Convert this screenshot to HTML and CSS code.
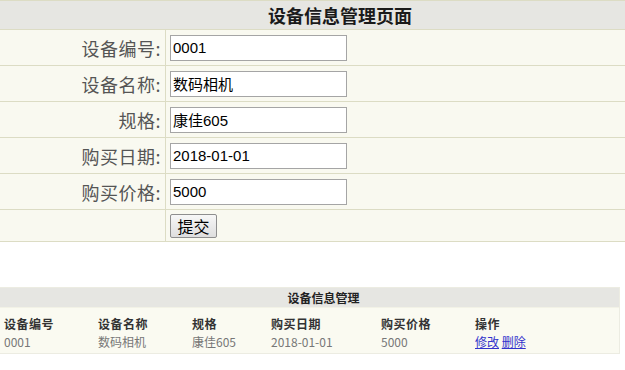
FILE: index.html
```html
<!DOCTYPE html>
<html lang="zh">
<head>
<meta charset="utf-8">
<link rel="stylesheet" href="styles.css">
</head>
<body>
<table class="form">
  <tr><th class="title" colspan="2">设备信息管理页面</th></tr>
  <tr><td class="label">设备编号:</td><td class="field"><input class="inp" type="text" value="0001"></td></tr>
  <tr><td class="label">设备名称:</td><td class="field"><input class="inp" type="text" value="数码相机"></td></tr>
  <tr><td class="label">规格:</td><td class="field"><input class="inp" type="text" value="康佳605"></td></tr>
  <tr><td class="label">购买日期:</td><td class="field"><input class="inp" type="text" value="2018-01-01"></td></tr>
  <tr><td class="label">购买价格:</td><td class="field"><input class="inp" type="text" value="5000"></td></tr>
  <tr class="last"><td class="label"></td><td class="field"><button class="btn">提交</button></td></tr>
</table>

<div class="list">
  <div class="list-head">设备信息管理</div>
  <table class="grid">
    <tr class="gh">
      <th class="c1">设备编号</th><th class="c2">设备名称</th><th class="c3">规格</th><th class="c4">购买日期</th><th class="c5">购买价格</th><th>操作</th>
    </tr>
    <tr class="gd">
      <td>0001</td><td>数码相机</td><td>康佳605</td><td>2018-01-01</td><td>5000</td><td><a href="#">修改</a> <a href="#">删除</a></td>
    </tr>
  </table>
</div>
</body>
</html>
```
FILE: styles.css
```css
html, body {
  margin: 0;
  padding: 0;
  background: #ffffff;
  overflow: hidden;
}
body {
  font-family: "Noto Sans CJK SC", "Liberation Sans", sans-serif;
}
.form {
  width: 625px;
  border-collapse: collapse;
  border-top: 1px solid #dcdcc4;
}
.form th.title {
  height: 28px;
  padding: 0 0 0 55px;
  background: #e6e6e2;
  color: #1a1a1a;
  font-size: 18px;
  font-weight: bold;
  text-align: center;
  border-bottom: 1px solid #dcdcc4;
  line-height: 28px;
}
.form td {
  background: #f9f9f0;
  border-bottom: 1px solid #dcdcc4;
  height: 35px;
  padding: 0;
}
.form tr.last td {
  height: 31px;
}
.form td.label {
  width: 161px;
  padding-right: 4px;
  border-right: 1px solid #dcdcc4;
  text-align: right;
  color: #555555;
  font-size: 18px;
  letter-spacing: 0.5px;
}
.form td.field {
  padding-left: 4px;
}
.inp {
  box-sizing: border-box;
  width: 177px;
  height: 26px;
  margin: 0;
  padding: 0 2px;
  border: 1px solid #a5a5a5;
  background: #ffffff;
  font-family: "Liberation Sans", "Noto Sans CJK SC", sans-serif;
  font-size: 15px;
  color: #000000;
  display: block;
}
.btn {
  display: block;
  box-sizing: border-box;
  width: 47px;
  height: 24px;
  margin: 1px 0 0 0;
  padding: 0;
  border: 1px solid #8e8e8e;
  border-radius: 2px;
  background: linear-gradient(#f7f7f7, #dedede);
  font-family: "Noto Sans CJK SC", sans-serif;
  font-size: 16px;
  line-height: 20px;
  color: #000000;
}
.list {
  margin-top: 45px;
  width: 619px;
  border: 1px solid #ecece2;
  border-left: none;
  background: #fafaf1;
}
.list-head {
  height: 19px;
  background: #e6e6e2;
  text-align: center;
  font-size: 12px;
  font-weight: bold;
  line-height: 19px;
  color: #222222;
  padding-left: 28px;
  border-bottom: 1px solid #f2f2e6;
}
.grid {
  border-collapse: collapse;
  margin-top: 6px;
  margin-bottom: 3px;
  width: 100%;
}
.grid th, .grid td {
  text-align: left;
  padding: 0 0 0 4px;
  font-size: 12px;
  height: 18px;
}
.grid th {
  font-weight: bold;
  color: #333333;
  letter-spacing: 0.5px;
}
.grid td {
  color: #777777;
}
.grid .c1 { width: 90px; }
.grid .c2 { width: 90px; }
.grid .c3 { width: 75px; }
.grid .c4 { width: 106px; }
.grid .c5 { width: 90px; }
.grid a {
  color: #3333cc;
  text-decoration: underline;
}
```
